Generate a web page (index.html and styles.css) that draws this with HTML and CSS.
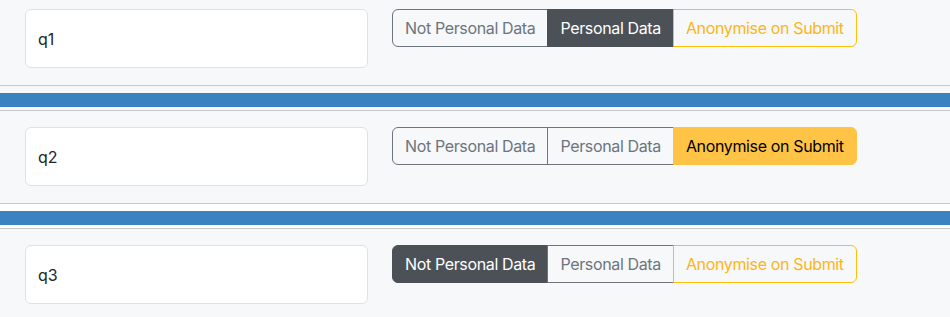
FILE: index.html
```html
<!DOCTYPE html>
<html lang="en">
<head>
  <meta charset="UTF-8" />
  <meta name="viewport" content="width=device-width, initial-scale=1.0" />
  <link rel="stylesheet" href="styles.css">
</head>
<body>
  <div class="question-list">
    <div class="question-row">
      <input class="question-input" type="text" value="q1" />
      <div class="btn-group">
        <label class="btn btn-outline-secondary">Not Personal Data</label>
        <label class="btn btn-outline-secondary active">Personal Data</label>
        <label class="btn btn-outline-warning">Anonymise on Submit</label>
      </div>
    </div>

    <div class="separator"><div class="separator-bar"></div></div>

    <div class="question-row">
      <input class="question-input" type="text" value="q2" />
      <div class="btn-group">
        <label class="btn btn-outline-secondary">Not Personal Data</label>
        <label class="btn btn-outline-secondary">Personal Data</label>
        <label class="btn btn-outline-warning active">Anonymise on Submit</label>
      </div>
    </div>

    <div class="separator white"><div class="separator-bar"></div></div>

    <div class="question-row">
      <input class="question-input" type="text" value="q3" />
      <div class="btn-group">
        <label class="btn btn-outline-secondary active">Not Personal Data</label>
        <label class="btn btn-outline-secondary">Personal Data</label>
        <label class="btn btn-outline-warning">Anonymise on Submit</label>
      </div>
    </div>
  </div>
</body>
</html>
```

FILE: styles.css
```css
html, body {
  margin: 0;
  padding: 0;
  font-family: Inter, "Noto Sans", Arial, sans-serif;
  background-color: #f7f8fa;
  color: #212529;
  overflow: hidden;
}

.question-list {
  margin-top: -7px;
}

.question-row {
  display: flex;
  align-items: flex-start;
  gap: 24px;
  padding: 16px 0 17px 25px;
  background-color: #f7f8fa;
}

.question-input {
  width: 343px;
  height: 59px;
  box-sizing: border-box;
  padding: 6px 12px;
  font-family: inherit;
  font-size: 16px;
  color: #212529;
  background-color: #ffffff;
  border: 1px solid #dee2e6;
  border-radius: 6px;
  outline: none;
}

.btn-group {
  display: flex;
}

.btn {
  display: inline-block;
  padding: 0 12px;
  height: 38px;
  line-height: 36px;
  box-sizing: border-box;
  font-size: 16px;
  letter-spacing: -0.36px;
  border: 1px solid;
  cursor: pointer;
  white-space: nowrap;
}

.btn + .btn {
  margin-left: -1px;
}

.btn:first-child {
  border-radius: 6px 0 0 6px;
}

.btn:last-child {
  border-radius: 0 6px 6px 0;
}

.btn-outline-secondary {
  color: #6c757d;
  border-color: #6c757d;
  background-color: transparent;
}

.btn-outline-secondary.active {
  color: #ffffff;
  background-color: #4b5157;
  border-color: #4b5157;
}

.btn-outline-warning {
  color: #fdb515;
  border-color: #ffc107;
  background-color: transparent;
  position: relative;
}

.btn-outline-warning.active {
  color: #000000;
  background-color: #ffc445;
  border-color: #ffc445;
}

.separator {
  border-top: 1px solid #c8c9cb;
  border-bottom: 1px solid #c8c9cb;
  padding: 7px 0 3px;
  background-color: #f7f8fa;
}

.separator.white {
  background-color: #ffffff;
}

.separator-bar {
  height: 14px;
  background-color: #3b82c0;
}
```
